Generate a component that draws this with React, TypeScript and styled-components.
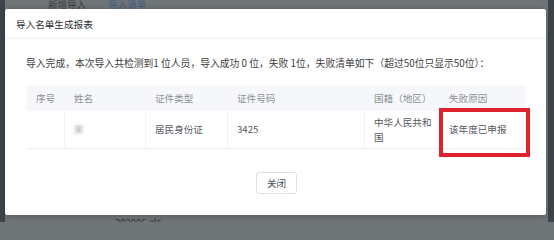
import React from "react";
import styled, { createGlobalStyle } from "styled-components";

const Global = createGlobalStyle`
  html, body { margin: 0; padding: 0; }
  body {
    font-family: "Noto Sans CJK SC", "Noto Sans", "Liberation Sans", sans-serif;
    background: #6f7477;
  }
`;

const Screen = styled.div`
  position: relative;
  width: 554px;
  height: 222px;
  overflow: hidden;
  display: flex;
  background: #6f7477;
`;

const SideStrip = styled.div<{ $w: number }>`
  width: ${(p) => p.$w}px;
  flex: none;
  background: #3d444c;
`;

const PageArea = styled.div`
  flex: 1;
  display: flex;
  flex-direction: column;
  justify-content: space-between;
`;

const Tabs = styled.div`
  display: flex;
  gap: 22px;
  padding-left: 43px;
  height: 10px;
  align-items: flex-end;
  font-size: 9.5px;
  line-height: 10px;
  overflow: hidden;
`;

const Tab = styled.span<{ $active?: boolean }>`
  color: ${(p) => (p.$active ? "#3f5f86" : "#3b4046")};
  transform: translateY(-1px);
`;

const FileName = styled.div`
  padding-left: 110px;
  height: 7px;
  font-size: 9.5px;
  line-height: 14px;
  color: #2f3438;
  overflow: hidden;
`;

const Modal = styled.div`
  position: absolute;
  left: 5px;
  top: 9px;
  width: 541px;
  height: 206px;
  background: #fff;
  border-radius: 2px;
  box-shadow: 0 1px 6px rgba(0, 0, 0, 0.25);
  display: flex;
  flex-direction: column;
`;

const Header = styled.div`
  height: 29px;
  border-bottom: 1px solid #eceef2;
  display: flex;
  align-items: center;
  padding: 0 11px;
  font-size: 9.6px;
  color: #2b2d31;
`;

const Body = styled.div`
  padding: 17px 21px 0 21px;
  display: flex;
  flex-direction: column;
`;

const Desc = styled.div`
  font-size: 9.8px;
  line-height: 14px;
  color: #3d3d3d;
  margin-bottom: 15px;
  white-space: nowrap;
`;

const Table = styled.div`
  display: grid;
  grid-template-columns: 38px 81px 82px 137px 75px 85px;
  width: 498px;
  margin-left: 1px;
  font-size: 9.6px;
`;

const HeadCell = styled.div`
  height: 26px;
  background: #f5f7fa;
  color: #8e9196;
  display: flex;
  align-items: center;
  padding-left: 9px;
`;

const Cell = styled.div<{ $last?: boolean }>`
  position: relative;
  height: 37px;
  border-bottom: 1px solid #ebeef5;
  border-right: ${(p) => (p.$last ? "none" : "1px solid #f2f3f6")};
  color: #555a60;
  display: flex;
  align-items: center;
  padding: 0 3px 0 9px;
  line-height: 15px;
`;

const Blurred = styled.span`
  filter: blur(1.2px);
  color: #9a9a9a;
`;

const Mark = styled.div`
  position: absolute;
  left: -1px;
  right: -5px;
  top: -3px;
  bottom: -9px;
  border: 4px solid #df232d;
  pointer-events: none;
`;

const Footer = styled.div`
  display: flex;
  justify-content: center;
  padding-top: 23px;
`;

const Button = styled.button`
  width: 41px;
  height: 22px;
  border: 1px solid #dcdfe6;
  border-radius: 3px;
  background: #fff;
  font-family: inherit;
  font-size: 9.6px;
  color: #4a4d52;
  padding: 0;
  margin-left: 2px;
`;

const heads = ["序号", "姓名", "证件类型", "证件号码", "国籍（地区）", "失败原因"];

export default function App() {
  return (
    <>
      <Global />
      <Screen>
        <SideStrip $w={5} />
        <PageArea>
          <Tabs>
            <Tab>新增导入</Tab>
            <Tab $active>导入清单</Tab>
          </Tabs>
          <FileName>202006.xls</FileName>
        </PageArea>
        <SideStrip $w={6} />
        <Modal>
          <Header>导入名单生成报表</Header>
          <Body>
            <Desc>
              导入完成，本次导入共检测到1 位人员，导入成功 0 位，失败 1位，失败清单如下（超过50位只显示50位）：
            </Desc>
            <Table>
              {heads.map((h) => (
                <HeadCell key={h}>{h}</HeadCell>
              ))}
              <Cell>
                <Blurred></Blurred>
              </Cell>
              <Cell>
                <Blurred>宋</Blurred>
              </Cell>
              <Cell>居民身份证</Cell>
              <Cell>
                3425<Blurred>.</Blurred>
              </Cell>
              <Cell>中华人民共和国</Cell>
              <Cell $last>
                该年度已申报
                <Mark />
              </Cell>
            </Table>
            <Footer>
              <Button>关闭</Button>
            </Footer>
          </Body>
        </Modal>
      </Screen>
    </>
  );
}
